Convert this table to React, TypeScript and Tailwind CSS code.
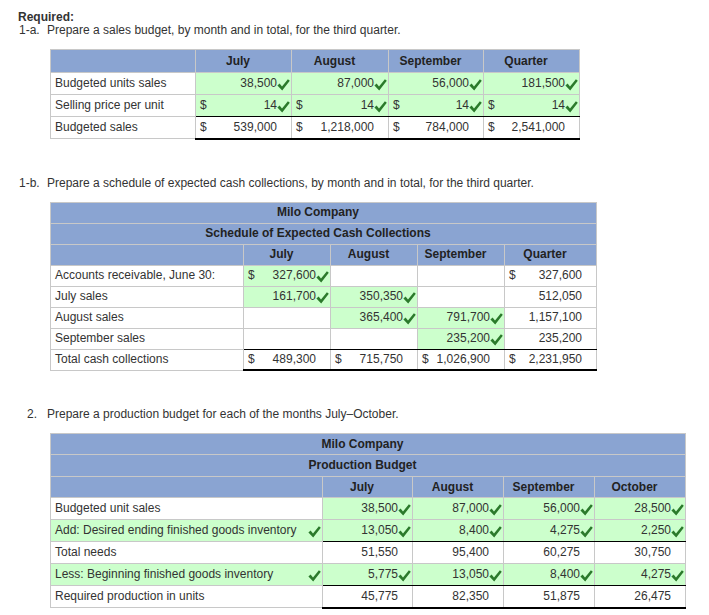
import React from "react";

type Cell = {
  v?: string;
  d?: boolean; // dollar sign on the left
  c?: boolean; // check mark
  g?: boolean; // green fill
};

type Row = {
  label: string;
  labelGreen?: boolean;
  labelCheck?: boolean;
  total?: boolean;
  last?: boolean;
  cells: Cell[];
};

const Check = () => (
  <svg width="13" height="12" viewBox="0 0 13 12" className="inline-block shrink-0 relative top-[1px]">
    <path d="M0.4 6.6 L2.6 4.6 L5 7.4 L10.9 0.3 L12.8 1.8 L5.2 11.6 Z" fill="#2b7a2b" />
  </svg>
);

function ValueCell({ cell, row, blackBelow }: { cell: Cell; row: Row; blackBelow: boolean }) {
  const cls = [
    "border border-[#c8c8c8] p-0",
    cell.g ? "bg-[#ccffcc]" : "bg-white",
    row.total ? "border-t-black" : "",
    row.last ? "border-b-2 border-b-black" : "",
    blackBelow ? "border-b-black" : "",
  ].join(" ");
  return (
    <td className={cls}>
      <div className="flex items-center justify-between pl-[4px] pr-[1px]">
        <span>{cell.d ? "$" : ""}</span>
        <span className="flex items-center">
          <span>{cell.v}</span>
          {cell.c ? <Check /> : cell.v ? <span className="w-[13px]" /> : null}
        </span>
      </div>
    </td>
  );
}

function Body({ rows, rowH }: { rows: Row[]; rowH: string }) {
  return (
    <tbody>
      {rows.map((row, i) => {
        const nextTotal = !!rows[i + 1]?.total;
        return (
          <tr key={row.label} className={rowH}>
            <td
              className={
                "border border-[#c8c8c8] p-0 " + (row.labelGreen ? "bg-[#ccffcc]" : "bg-white")
              }
            >
              <div className="flex items-center justify-between pl-[4px] pr-[1px]">
                <span>{row.label}</span>
                {row.labelCheck ? <Check /> : null}
              </div>
            </td>
            {row.cells.map((cell, j) => (
              <ValueCell key={j} cell={cell} row={row} blackBelow={nextTotal} />
            ))}
          </tr>
        );
      })}
    </tbody>
  );
}

const th = "border border-[#c8c8c8] bg-[#8aa4d2] py-0 pl-0 pr-[11px] text-center font-bold text-[#222]";

const salesRows: Row[] = [
  {
    label: "Budgeted units sales",
    cells: [
      { v: "38,500", c: true, g: true },
      { v: "87,000", c: true, g: true },
      { v: "56,000", c: true, g: true },
      { v: "181,500", c: true, g: true },
    ],
  },
  {
    label: "Selling price per unit",
    cells: [
      { v: "14", d: true, c: true, g: true },
      { v: "14", d: true, c: true, g: true },
      { v: "14", d: true, c: true, g: true },
      { v: "14", d: true, c: true, g: true },
    ],
  },
  {
    label: "Budgeted sales",
    total: true,
    last: true,
    cells: [
      { v: "539,000", d: true },
      { v: "1,218,000", d: true },
      { v: "784,000", d: true },
      { v: "2,541,000", d: true },
    ],
  },
];

const cashRows: Row[] = [
  {
    label: "Accounts receivable, June 30:",
    cells: [{ v: "327,600", d: true, c: true, g: true }, {}, {}, { v: "327,600", d: true }],
  },
  {
    label: "July sales",
    cells: [
      { v: "161,700", c: true, g: true },
      { v: "350,350", c: true, g: true },
      {},
      { v: "512,050" },
    ],
  },
  {
    label: "August sales",
    cells: [
      {},
      { v: "365,400", c: true, g: true },
      { v: "791,700", c: true, g: true },
      { v: "1,157,100" },
    ],
  },
  {
    label: "September sales",
    cells: [{}, {}, { v: "235,200", c: true, g: true }, { v: "235,200" }],
  },
  {
    label: "Total cash collections",
    total: true,
    last: true,
    cells: [
      { v: "489,300", d: true },
      { v: "715,750", d: true },
      { v: "1,026,900", d: true },
      { v: "2,231,950", d: true },
    ],
  },
];

const prodRows: Row[] = [
  {
    label: "Budgeted unit sales",
    cells: [
      { v: "38,500", c: true, g: true },
      { v: "87,000", c: true, g: true },
      { v: "56,000", c: true, g: true },
      { v: "28,500", c: true, g: true },
    ],
  },
  {
    label: "Add: Desired ending finished goods inventory",
    labelGreen: true,
    labelCheck: true,
    cells: [
      { v: "13,050", c: true, g: true },
      { v: "8,400", c: true, g: true },
      { v: "4,275", c: true, g: true },
      { v: "2,250", c: true, g: true },
    ],
  },
  {
    label: "Total needs",
    total: true,
    cells: [{ v: "51,550" }, { v: "95,400" }, { v: "60,275" }, { v: "30,750" }],
  },
  {
    label: "Less: Beginning finished goods inventory",
    labelGreen: true,
    labelCheck: true,
    cells: [
      { v: "5,775", c: true, g: true },
      { v: "13,050", c: true, g: true },
      { v: "8,400", c: true, g: true },
      { v: "4,275", c: true, g: true },
    ],
  },
  {
    label: "Required production in units",
    total: true,
    last: true,
    cells: [{ v: "45,775" }, { v: "82,350" }, { v: "51,875" }, { v: "26,475" }],
  },
];

export default function App() {
  return (
    <div className="min-h-[615px] w-[709px] bg-white pt-[11px] font-['Liberation_Sans',Arial,sans-serif] text-[12px] leading-[13px] text-[#333]">
      <div className="pl-[18px] font-bold">Required:</div>
      <div className="flex pl-[19px]">
        <span className="w-[28px]">1-a.</span>
        <span>Prepare a sales budget, by month and in total, for the third quarter.</span>
      </div>

      <table className="mt-[12px] ml-[50px] w-[529px] table-fixed border-collapse">
        <colgroup>
          <col className="w-[145px]" />
          <col className="w-[96px]" />
          <col className="w-[97px]" />
          <col className="w-[95px]" />
          <col className="w-[96px]" />
        </colgroup>
        <thead>
          <tr className="h-[23px]">
            <th className={th}></th>
            <th className={th}>July</th>
            <th className={th}>August</th>
            <th className={th}>September</th>
            <th className={th}>Quarter</th>
          </tr>
        </thead>
        <Body rows={salesRows} rowH="h-[22px]" />
      </table>

      <div className="mt-[37px] flex pl-[19px]">
        <span className="w-[28px]">1-b.</span>
        <span>Prepare a schedule of expected cash collections, by month and in total, for the third quarter.</span>
      </div>

      <table className="mt-[12px] ml-[50px] w-[546px] table-fixed border-collapse">
        <colgroup>
          <col className="w-[193px]" />
          <col className="w-[87px]" />
          <col className="w-[87px]" />
          <col className="w-[87px]" />
          <col className="w-[92px]" />
        </colgroup>
        <thead>
          <tr className="h-[21px]">
            <th className={th} colSpan={5}>Milo Company</th>
          </tr>
          <tr className="h-[21px]">
            <th className={th} colSpan={5}>Schedule of Expected Cash Collections</th>
          </tr>
          <tr className="h-[21px]">
            <th className={th}></th>
            <th className={th}>July</th>
            <th className={th}>August</th>
            <th className={th}>September</th>
            <th className={th}>Quarter</th>
          </tr>
        </thead>
        <Body rows={cashRows} rowH="h-[21px]" />
      </table>

      <div className="mt-[37px] flex pl-[27px]">
        <span className="w-[20px]">2.</span>
        <span>Prepare a production budget for each of the months July–October.</span>
      </div>

      <table className="mt-[12px] ml-[50px] w-[635px] table-fixed border-collapse">
        <colgroup>
          <col className="w-[272px]" />
          <col className="w-[90px]" />
          <col className="w-[91px]" />
          <col className="w-[91px]" />
          <col className="w-[91px]" />
        </colgroup>
        <thead>
          <tr className="h-[21px]">
            <th className={th} colSpan={5}>Milo Company</th>
          </tr>
          <tr className="h-[22px]">
            <th className={th} colSpan={5}>Production Budget</th>
          </tr>
          <tr className="h-[21px]">
            <th className={th}></th>
            <th className={th}>July</th>
            <th className={th}>August</th>
            <th className={th}>September</th>
            <th className={th}>October</th>
          </tr>
        </thead>
        <Body rows={prodRows} rowH="h-[22px]" />
      </table>
    </div>
  );
}
